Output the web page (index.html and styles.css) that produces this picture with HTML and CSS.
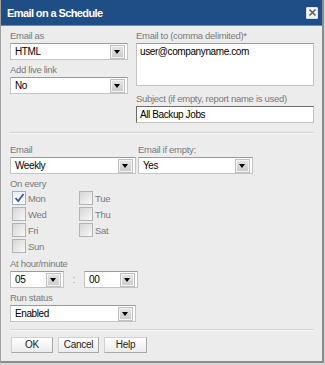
FILE: index.html
```html
<!DOCTYPE html>
<html>
<head>
<meta charset="utf-8">
<link rel="stylesheet" href="styles.css">
</head>
<body>
<div class="dialog">
  <div class="titlebar">
    <span class="title">Email on a Schedule</span>
    <span class="close"><svg width="9" height="9" viewBox="0 0 9 9"><path d="M1.5 1.5 L7.5 7.5 M7.5 1.5 L1.5 7.5" stroke="#5a5a5a" stroke-width="1.5" fill="none"/></svg></span>
  </div>
  <div class="content">
    <div class="top">
      <div class="col-left">
        <div class="label">Email as</div>
        <div class="select w118"><span class="val">HTML</span><span class="arrow"></span></div>
        <div class="label mt4">Add live link</div>
        <div class="select w118"><span class="val">No</span><span class="arrow"></span></div>
      </div>
      <div class="col-right">
        <div class="label">Email to (comma delimited)*</div>
        <div class="textarea">user@companyname.com</div>
        <div class="label mt7">Subject (if empty, report name is used)</div>
        <div class="input">All Backup Jobs</div>
      </div>
    </div>
    <div class="sep"></div>
    <div class="row2">
      <div>
        <div class="label">Email</div>
        <div class="select w126"><span class="val">Weekly</span><span class="arrow"></span></div>
      </div>
      <div>
        <div class="label">Email if empty:</div>
        <div class="select w115"><span class="val">Yes</span><span class="arrow"></span></div>
      </div>
    </div>
    <div class="label mt4">On every</div>
    <div class="days">
      <label class="day"><span class="cb checked"><svg width="11" height="10" viewBox="0 0 11 10"><path d="M1.5 5 L4.2 8 L9.5 1" stroke="#3b57a8" stroke-width="1.8" fill="none"/></svg></span>Mon</label>
      <label class="day"><span class="cb"></span>Tue</label>
      <label class="day"><span class="cb"></span>Wed</label>
      <label class="day"><span class="cb"></span>Thu</label>
      <label class="day"><span class="cb"></span>Fri</label>
      <label class="day"><span class="cb"></span>Sat</label>
      <label class="day"><span class="cb"></span>Sun</label>
    </div>
    <div class="label mt5">At hour/minute</div>
    <div class="time">
      <div class="select w54"><span class="val">05</span><span class="arrow"></span></div>
      <span class="colon">:</span>
      <div class="select w54"><span class="val">00</span><span class="arrow"></span></div>
    </div>
    <div class="label mt4">Run status</div>
    <div class="select w126"><span class="val">Enabled</span><span class="arrow"></span></div>
    <div class="sep sep2"></div>
    <div class="buttons">
      <button class="btn w42">OK</button>
      <button class="btn w41">Cancel</button>
      <button class="btn w43">Help</button>
    </div>
  </div>
</div>
</body>
</html>
```

FILE: styles.css
```css
* { box-sizing: border-box; }
html, body { margin: 0; padding: 0; background: #d6d6d6; }
body { font-family: "Liberation Sans", Arial, sans-serif; font-size: 10px; }
.dialog {
  width: 324px;
  height: 363px;
  background: #ececec;
  border-left: 1px solid #a0a0a0;
  border-right: 2px solid #8c8c8c;
  border-bottom: 2px solid #8c8c8c;
}
.titlebar {
  height: 26px;
  background: #1f4e86;
  display: flex;
  align-items: center;
  justify-content: space-between;
  padding: 0 4px 0 6px;
  border-bottom: 1px solid #6f8bb0;
}
.title { color: #fff; font-weight: bold; font-size: 11px; letter-spacing: -0.6px; }
.close {
  width: 12px; height: 12px;
  background: #f2f2f2;
  border: 1px solid #d8dee8;
  display: flex; align-items: center; justify-content: center;
  border-radius: 1px;
}
.content { padding: 4px 8px 0 9px; }
.label { color: #7a7a7a; font-size: 9.5px; letter-spacing: -0.3px; line-height: 12px; height: 12px; margin-bottom: 1px; white-space: nowrap; }
.mt4 { margin-top: 4px; }
.mt5 { margin-top: 5px; }
.mt7 { margin-top: 7px; }
.top { display: flex; gap: 8px; }
.col-left { width: 118px; }
.col-right { width: 180px; }
.select {
  height: 17px;
  background: #fff;
  border: 1px solid #c4c4c4;
  border-top-color: #9a9a9a;
  display: flex;
  align-items: center;
  justify-content: space-between;
  padding: 0 3px 0 4px;
  color: #000;
}
.val, .textarea, .input { font-size: 10px; letter-spacing: -0.4px; }
.val { line-height: 14px; }
.arrow {
  width: 13px; height: 12px;
  background: linear-gradient(#e4e4e4, #cdcdcd);
  border: 1px solid #f4f4f4;
  outline: 1px solid #c0c0c0;
  position: relative;
}
.arrow::after {
  content: "";
  position: absolute;
  left: 2px; top: 3px;
  border-left: 3.5px solid transparent;
  border-right: 3.5px solid transparent;
  border-top: 4px solid #000;
}
.w118 { width: 118px; }
.w126 { width: 126px; }
.w115 { width: 115px; }
.w54 { width: 54px; }
.textarea {
  height: 43px;
  background: #fff;
  border: 1px solid #c4c4c4;
  border-top-color: #9a9a9a;
  padding: 2px 3px;
  color: #000;
}
.input {
  height: 17px;
  background: #fff;
  border: 1px solid #c4c4c4;
  border-top-color: #6c6c6c;
  border-left-color: #6c6c6c;
  padding: 1px 3px;
  line-height: 13px;
  color: #000;
}
.sep { height: 2px; background: #d4d4d4; border-bottom: 1px solid #f8f8f8; margin: 9px 0 10px 0; }
.sep2 { margin: 7px 0 6px 0; }
.row2 { display: flex; gap: 2px; }
.days {
  display: grid;
  grid-template-columns: 67px 60px;
  row-gap: 2px;
  margin-top: 1px;
  width: 130px;
  padding-left: 2px;
}
.day { display: flex; align-items: center; color: #7a7a7a; font-size: 9.5px; letter-spacing: -0.3px; height: 14px; }
.cb {
  width: 14px; height: 14px;
  border: 1px solid #b3b3b3;
  background: linear-gradient(135deg, #d6d6d6, #f8f8f8);
  margin-right: 2px;
  display: flex; align-items: center; justify-content: center;
}
.cb.checked { background: linear-gradient(#eef1f8, #ffffff); border-color: #a6adbf; }
.time { display: flex; align-items: center; }
.colon { width: 20px; text-align: center; color: #a0a0a0; }
.buttons { display: flex; gap: 5px; padding-left: 1px; }
.btn {
  height: 16px;
  font-family: "Liberation Sans", Arial, sans-serif;
  font-size: 10px;
  letter-spacing: -0.3px;
  color: #222;
  background: linear-gradient(#ffffff, #ececec);
  border: 1px solid #d0d0d0;
  border-bottom-color: #a8a8a8;
  border-right-color: #a8a8a8;
  padding: 0;
  line-height: 14px;
}
.w42 { width: 42px; }
.w41 { width: 41px; }
.w43 { width: 43px; }
```
